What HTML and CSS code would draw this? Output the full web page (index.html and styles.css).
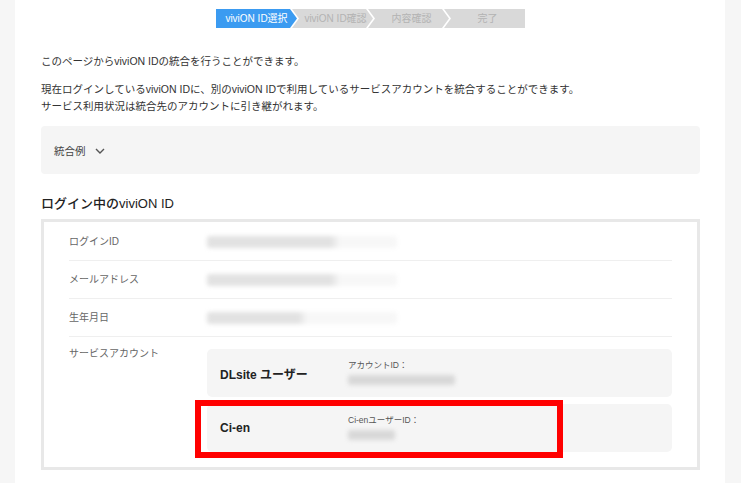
FILE: index.html
```html
<!DOCTYPE html>
<html lang="ja">
<head>
  <meta charset="UTF-8" />
  <title>viviON ID統合</title>
  <link rel="stylesheet" href="styles.css">
</head>
<body>

  <div class="page">

    <ol class="steps">
      <li class="step step-first active">viviON ID選択</li>
      <li class="step">viviON ID確認</li>
      <li class="step">内容確認</li>
      <li class="step step-last">完了</li>
    </ol>

    <p class="lead">このページからviviON IDの統合を行うことができます。</p>
    <p class="lead">現在ログインしているviviON IDに、別のviviON IDで利用しているサービスアカウントを統合することができます。<br>サービス利用状況は統合先のアカウントに引き継がれます。</p>

    <div class="accordion">
      <span>統合例</span>
      <svg class="chevron" width="10" height="6" viewBox="0 0 10 6"><polyline points="1,1 5,5 9,1" fill="none" stroke="#555" stroke-width="1.4" /></svg>
    </div>

    <h2 class="section-title">ログイン中のviviON ID</h2>

    <div class="info">
      <div class="row">
        <div class="label">ログインID</div>
        <div class="value"><span class="blur blur-wide"></span></div>
      </div>
      <div class="row">
        <div class="label">メールアドレス</div>
        <div class="value"><span class="blur blur-wide"></span></div>
      </div>
      <div class="row">
        <div class="label">生年月日</div>
        <div class="value"><span class="blur blur-short"></span></div>
      </div>
      <div class="row row-services">
        <div class="label">サービスアカウント</div>
        <div class="cards">
          <div class="card">
            <div class="card-name">DLsite ユーザー</div>
            <div class="card-id">
              <div class="id-label">アカウントID：</div>
              <span class="blur blur-card"></span>
            </div>
          </div>
          <div class="card card-marked">
            <div class="card-name">Ci-en</div>
            <div class="card-id">
              <div class="id-label">Ci-enユーザーID：</div>
              <span class="blur blur-card-short"></span>
            </div>
            <div class="highlight"></div>
          </div>
        </div>
      </div>
    </div>

  </div>

</body>
</html>
```

FILE: styles.css
```css
* { box-sizing: border-box; }
body { margin: 0; background: #f6f6f6; font-family: "Liberation Sans", "Noto Sans CJK JP", sans-serif; color: #333; }
.page { margin-left: 15px; width: 710px; min-height: 100vh; background: #fff; padding: 9px 25px 0 26px; }

.steps { display: flex; justify-content: center; list-style: none; margin: 0; padding: 0; }
.step { width: 81px; height: 19px; line-height: 19px; margin-left: -5px; padding-left: 6px; text-align: center; font-size: 10px; background: #d9d9d9; color: #b3b3b3;
  clip-path: polygon(0 0, calc(100% - 7px) 0, 100% 50%, calc(100% - 7px) 100%, 0 100%, 7px 50%); }
.step-first { margin-left: 0; padding-left: 0; clip-path: polygon(0 0, calc(100% - 7px) 0, 100% 50%, calc(100% - 7px) 100%, 0 100%); }
.step-last { clip-path: polygon(0 0, 100% 0, 100% 100%, 0 100%, 7px 50%); }
.step.active { background: #3b9bf1; color: #fff; }

.lead { margin: 0; font-size: 10.5px; line-height: 17px; }
.lead:first-of-type { margin-top: 25px; }
.lead + .lead { margin-top: 11px; }

.accordion { margin-top: 11px; height: 48px; background: #f5f5f5; border-radius: 4px; padding-left: 13px; display: flex; align-items: center; gap: 9px; font-size: 10.5px; color: #444; }
.chevron { margin-top: 1px; }

.section-title { margin: 21px 0 0; font-size: 13px; line-height: 18px; font-weight: 500; color: #222; }

.info { margin-top: 6px; border: 3px solid #e8e8e8; padding: 1px 25px 15px; }
.row { display: grid; grid-template-columns: 138px 1fr; align-items: center; height: 38px; border-bottom: 1px solid #efefef; }
.label { font-size: 10px; color: #666; line-height: 14px; }
.value { display: flex; align-items: center; }

.blur { display: block; height: 12px; border-radius: 3px; filter: blur(2px); }
.blur-wide { width: 190px; background: linear-gradient(90deg, #e2e2e2 0, #e2e2e2 65%, #f7f7f7 70%, #f7f7f7 100%); }
.blur-short { width: 190px; background: linear-gradient(90deg, #e2e2e2 0, #e2e2e2 48%, #f7f7f7 53%, #f7f7f7 100%); }
.blur-card { width: 107px; height: 10px; background: #d8d8d8; }
.blur-card-short { width: 47px; height: 10px; background: #d8d8d8; }

.row-services { height: auto; align-items: start; border-bottom: none; padding-top: 10px; }
.cards { display: flex; flex-direction: column; gap: 7px; margin-top: 2px; }
.card { position: relative; display: grid; grid-template-columns: 128px 1fr; align-items: center; height: 48px; padding-left: 13px; background: #f5f5f5; border-radius: 5px; }
.card-name { font-size: 12px; font-weight: bold; color: #222; }
.card-id { display: flex; flex-direction: column; gap: 4px; margin-top: -2px; }
.id-label { font-size: 8.5px; color: #555; line-height: 11px; }

.highlight { position: absolute; left: -12px; top: -4px; width: 368px; height: 58px; border: 6px solid #f00; }
```
